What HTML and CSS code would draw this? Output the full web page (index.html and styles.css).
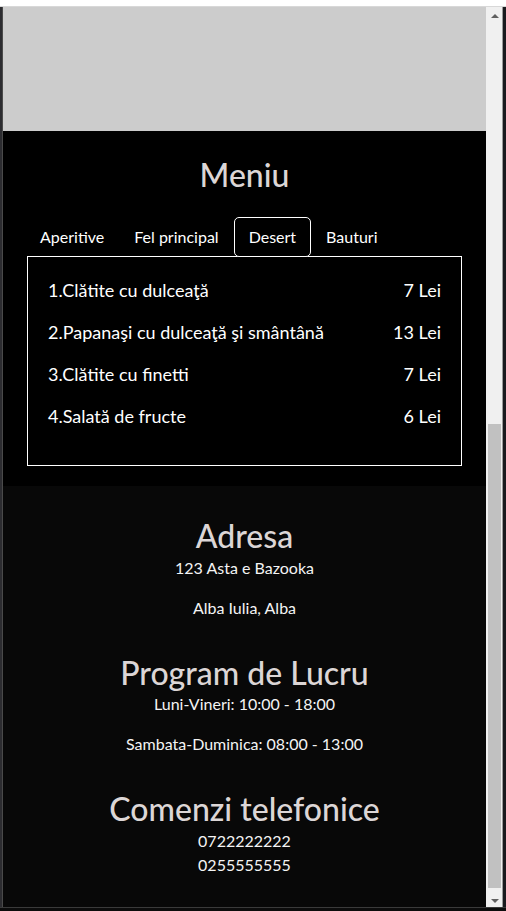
FILE: index.html
```html
<!DOCTYPE html>
<html lang="ro">
<head>
<meta charset="utf-8">
<title>Meniu</title>
<link rel="stylesheet" href="styles.css">
</head>
<body>
<div class="window">
  <div class="topbar"></div>
  <div class="frame">
    <div class="edge-left"></div>
    <main class="page">
      <div class="hero"></div>
      <section class="menu">
        <h2 class="title">Meniu</h2>
        <nav class="tabs">
          <span class="tab">Aperitive</span>
          <span class="tab">Fel principal</span>
          <span class="tab active">Desert</span>
          <span class="tab">Bauturi</span>
        </nav>
        <div class="tab-box">
          <div class="item"><span>1.Clătite cu dulceaţă</span><span>7 Lei</span></div>
          <div class="item"><span>2.Papanaşi cu dulceaţă şi smântână</span><span>13 Lei</span></div>
          <div class="item"><span>3.Clătite cu finetti</span><span>7 Lei</span></div>
          <div class="item"><span>4.Salată de fructe</span><span>6 Lei</span></div>
        </div>
      </section>
      <section class="info">
        <div class="block">
          <h2 class="title">Adresa</h2>
          <p>123 Asta e Bazooka</p>
          <p>Alba Iulia, Alba</p>
        </div>
        <div class="block">
          <h2 class="title">Program de Lucru</h2>
          <p>Luni-Vineri: 10:00 - 18:00</p>
          <p>Sambata-Duminica: 08:00 - 13:00</p>
        </div>
        <div class="block">
          <h2 class="title">Comenzi telefonice</h2>
          <p class="phones">0722222222<br>0255555555</p>
        </div>
      </section>
    </main>
    <div class="scrollbar">
      <div class="sb-btn"><span class="arrow-up"></span></div>
      <div class="sb-track"><div class="sb-thumb"></div></div>
      <div class="sb-btn"><span class="arrow-down"></span></div>
    </div>
    <div class="edge-right"></div>
  </div>
  <div class="bottombar"></div>
</div>
</body>
</html>
```

FILE: styles.css
```css
* { box-sizing: border-box; }

html, body {
  margin: 0;
  padding: 0;
  background: #111113;
  font-family: Lato, "Open Sans", sans-serif;
}

.window {
  width: 506px;
  height: 911px;
  display: flex;
  flex-direction: column;
  overflow: hidden;
}

.topbar {
  height: 7px;
  background: #ffffff;
  border-bottom: 1px solid #d8d8d8;
  flex: none;
}

.frame {
  height: 900px;
  display: flex;
  flex: none;
}

.edge-left {
  width: 3px;
  background: #2c2c30;
  border-right: 1px solid #4a4a4a;
  flex: none;
}

.page {
  width: 483px;
  flex: none;
  overflow: hidden;
  color: #ffffff;
}

.hero {
  height: 124px;
  background: #cccccc;
}

.title {
  margin: 0;
  font-size: 32px;
  line-height: 1.2;
  font-weight: 500;
  color: #dcd6d6;
  text-align: center;
}

.menu {
  background: #000000;
  padding: 25px 24px 20px;
}

.tabs {
  display: flex;
  margin-top: 23px;
  margin-left: -2px;
}

.tab {
  font-size: 16px;
  line-height: 24px;
  padding: 7px 14px;
  border: 1px solid transparent;
  border-radius: 5px 5px 0 0;
  margin-bottom: -1px;
  color: #ffffff;
}

.tab.active {
  border-color: #ffffff;
  border-radius: 5px;
  background: #000;
  position: relative;
  z-index: 1;
}

.tab-box {
  border: 1px solid #ffffff;
  padding: 20px;
}

.item {
  display: flex;
  justify-content: space-between;
  font-size: 18px;
  line-height: 27px;
  margin-bottom: 15px;
}

.info {
  background: #080808;
  padding-top: 31px;
  display: flex;
  flex-direction: column;
  gap: 18px;
  text-align: center;
  min-height: 421px;
}

.info p {
  margin: 0 0 16px;
  font-size: 16px;
  line-height: 24px;
  color: #f4f4f4;
}

.scrollbar {
  width: 16px;
  flex: none;
  background: #f0f0f0;
  display: flex;
  flex-direction: column;
}

.sb-btn {
  height: 17px;
  display: flex;
  align-items: center;
  justify-content: center;
  flex: none;
}

.arrow-up, .arrow-down {
  width: 0;
  height: 0;
  border-left: 4px solid transparent;
  border-right: 4px solid transparent;
}

.arrow-up { border-bottom: 4px solid #606060; margin-left: 1px; }
.arrow-down { border-top: 4px solid #606060; margin-left: 1px; margin-top: 4px; }

.sb-track {
  flex: 1;
  padding: 400px 1px 0 2px;
}

.sb-thumb {
  height: 464px;
  background: #c1c1c1;
}

.edge-right {
  width: 4px;
  flex: none;
  background: #1a1a1e;
  border-left: 1px solid #9a9a9a;
}

.bottombar {
  flex: 1;
  background: #0c0c0c;
  border-top: 1px solid #3a3a3a;
}
```
